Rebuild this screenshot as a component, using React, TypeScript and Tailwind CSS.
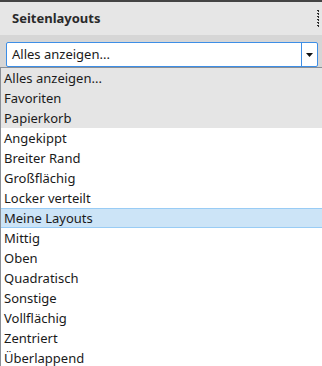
const ITEMS = [
  'Alles anzeigen...',
  'Favoriten',
  'Papierkorb',
  'Angekippt',
  'Breiter Rand',
  'Großflächig',
  'Locker verteilt',
  'Meine Layouts',
  'Mittig',
  'Oben',
  'Quadratisch',
  'Sonstige',
  'Vollflächig',
  'Zentriert',
  'Überlappend',
];

// first three entries are the "special" ones drawn on grey
const SPECIAL = 3;
const SELECTED = 'Meine Layouts';

function Grip() {
  return (
    <svg width="4" height="18" viewBox="0 0 4 18" className="block">
      {[0, 3, 6, 9, 12, 15].map((y) => (
        <g key={y}>
          <rect x="1" y={y} width="2" height="1" fill="#2b2b2b" />
          <rect x="2" y={y + 1} width="1" height="1" fill="#2b2b2b" />
        </g>
      ))}
    </svg>
  );
}

export default function App() {
  return (
    <div className="flex h-[366px] w-[322px] flex-col overflow-hidden bg-white font-['Noto_Sans',sans-serif] text-[#1a1a1a]">
      <div className="h-[2px] shrink-0 bg-[#444]" />

      <div className="flex h-[33px] shrink-0 items-center justify-between bg-[#e6e6e6] pl-3 pr-[2px]">
        <span className="text-[13px] font-bold text-[#2a2a2a]">Seitenlayouts</span>
        <Grip />
      </div>

      <div className="flex h-[32px] shrink-0 items-start bg-[#d6d6d6] pl-[6px] pr-[4px] pt-[7px]">
        <div className="flex h-[25px] flex-1 items-stretch rounded-[2px] border border-[#3d8ee6] bg-white">
          <span className="flex flex-1 items-center pl-[5px] text-[13px] leading-none">Alles anzeigen...</span>
          <div className="flex w-[16px] items-center justify-center border-l border-[#3d8ee6]">
            <svg width="7" height="4" viewBox="0 0 7 4">
              <path d="M0 0h7L3.5 4z" fill="#111" />
            </svg>
          </div>
        </div>
      </div>

      <ul className="flex-1 border-l border-t border-[#8a8f96]">
        {ITEMS.map((item, i) => {
          const selected = item === SELECTED;

          return (
            <li
              key={item}
              className={
                selected
                  ? 'flex h-[20px] items-center border-y border-[#99ccf5] bg-[#cce4f7] pl-[3px] text-[13px] leading-none'
                  : i < SPECIAL
                    ? 'flex h-[20px] items-center bg-[#e5e5e5] pl-[3px] text-[13px] leading-none'
                    : 'flex h-[20px] items-center pl-[3px] text-[13px] leading-none'
              }
            >
              {item}
            </li>
          );
        })}
      </ul>
    </div>
  );
}
